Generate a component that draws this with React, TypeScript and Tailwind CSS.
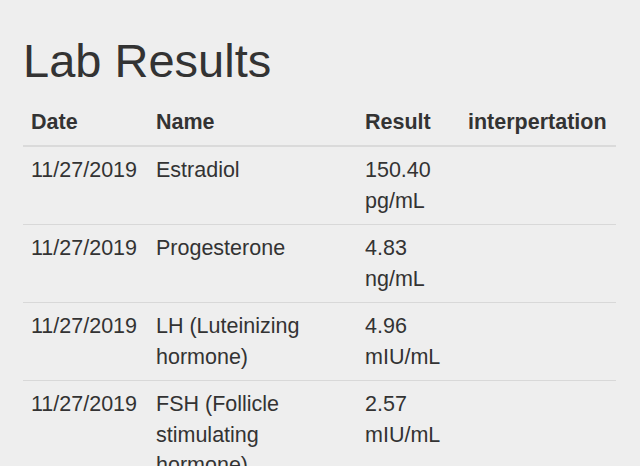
const rows = [
  { date: '11/27/2019', name: 'Estradiol', result: '150.40 pg/mL' },
  { date: '11/27/2019', name: 'Progesterone', result: '4.83 ng/mL' },
  { date: '11/27/2019', name: 'LH (Luteinizing hormone)', result: '4.96 mIU/mL' },
  { date: '11/27/2019', name: 'FSH (Follicle stimulating hormone)', result: '2.57 mIU/mL' },
]

export default function App() {
  return (
    <div className="h-[466px] overflow-hidden bg-[#eeeeee] pl-[23px] pt-[35px] font-['Liberation_Sans',Arial,sans-serif] text-[#333333]">
      <h1 className="text-[47px] leading-[1.1] font-normal">Lab Results</h1>
      <table className="mt-[12px] w-[593px] table-fixed border-collapse text-[21.5px] leading-[30.5px]">
        <colgroup>
          <col className="w-[125px]" />
          <col className="w-[209px]" />
          <col className="w-[103px]" />
          <col className="w-[156px]" />
        </colgroup>
        <thead>
          <tr>
            <th className="border-b-2 border-[#dadada] px-2 py-2 text-left align-bottom font-bold">Date</th>
            <th className="border-b-2 border-[#dadada] px-2 py-2 text-left align-bottom font-bold">Name</th>
            <th className="border-b-2 border-[#dadada] px-2 py-2 text-left align-bottom font-bold">Result</th>
            <th className="border-b-2 border-[#dadada] px-2 py-2 text-left align-bottom font-bold">interpertation</th>
          </tr>
        </thead>
        <tbody>
          {rows.map((r, i) => (
            <tr key={i} className={i > 0 ? 'border-t border-[#d8d8d8]' : ''}>
              <td className="px-2 py-2 align-top">{r.date}</td>
              <td className="px-2 py-2 align-top">{r.name}</td>
              <td className="px-2 py-2 align-top">{r.result}</td>
              <td className="px-2 py-2 align-top"></td>
            </tr>
          ))}
        </tbody>
      </table>
    </div>
  )
}
